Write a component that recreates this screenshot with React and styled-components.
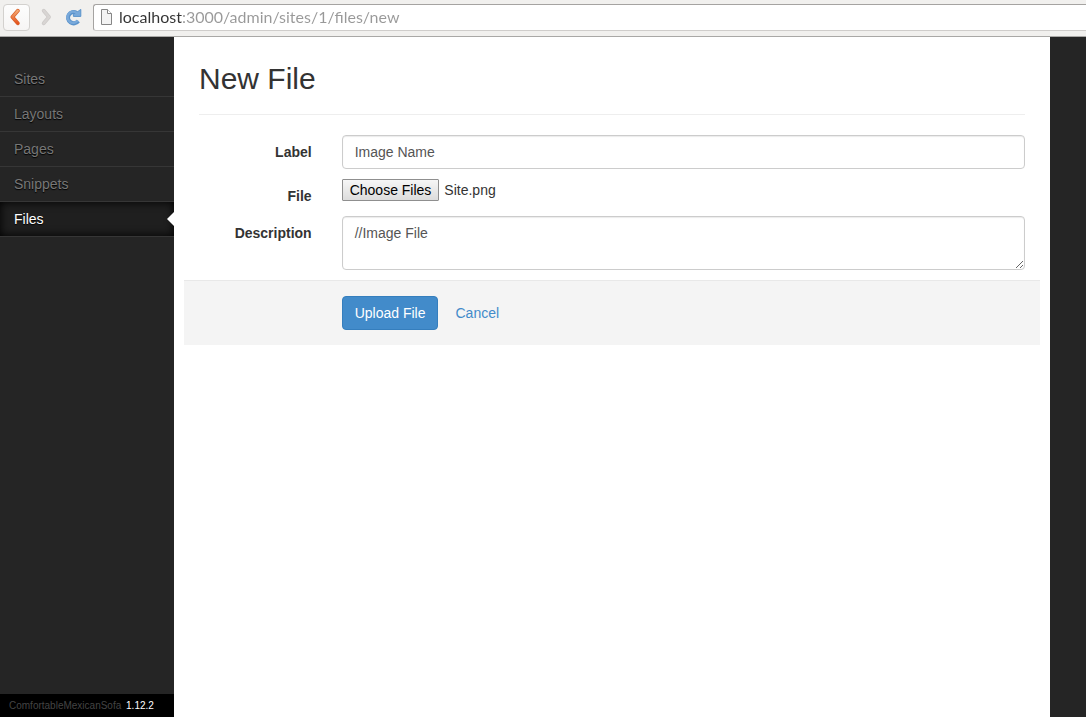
import React, { useEffect, useRef } from "react";
import styled, { createGlobalStyle, css } from "styled-components";

const GlobalStyle = createGlobalStyle`
  *, *::before, *::after { box-sizing: border-box; }
  body {
    margin: 0;
    background: #252525;
    color: #333;
    font: 14px/20px "Liberation Sans", Arial, sans-serif;
  }
  input, textarea, button { font: inherit; }
`;

const Page = styled.div`
  display: flex;
  flex-direction: column;
  min-height: 100vh;
`;

const Toolbar = styled.header`
  display: flex;
  align-items: center;
  height: 37px;
  padding: 0 0 2px 3px;
  background: #f1f0ee;
  border-bottom: 1px solid #a9a8a6;
`;

const ToolButton = styled.button`
  display: flex;
  align-items: center;
  justify-content: center;
  width: 27px;
  height: 27px;
  margin-right: 1px;
  padding: 0;
  border: 1px solid ${(p) => (p.$raised ? "#d3d1ce" : "transparent")};
  border-radius: 4px;
  background: ${(p) => (p.$raised ? "linear-gradient(#fdfdfd, #f6f5f4)" : "none")};
`;

const AddressBar = styled.div`
  display: flex;
  align-items: center;
  flex: 1;
  gap: 6px;
  height: 27px;
  margin-left: 6px;
  padding-left: 6px;
  background: #fff;
  border: 1px solid #a5a3a1;
  border-bottom-color: #cfcdcb;
  border-right: 0;
  border-radius: 3px 0 0 3px;
`;

const AddressInput = styled.input`
  flex: 1;
  min-width: 0;
  height: 24px;
  padding: 0;
  border: 0;
  outline: 0;
  font: 16px/24px Lato, "Noto Sans", sans-serif;
  color: transparent;
  background: linear-gradient(to right, #333 63px, #999 63px);
  background-clip: text;
`;

const Body = styled.div`
  display: flex;
  flex: 1;
`;

const Sidebar = styled.aside`
  display: flex;
  flex-direction: column;
  justify-content: space-between;
  flex: none;
  width: 174px;
  padding-top: 25px;
`;

const NavList = styled.ul`
  list-style: none;
  margin: 0;
  padding: 0;
`;

const NavLink = styled.a`
  position: relative;
  display: block;
  padding: 7px 14px;
  border-bottom: 1px solid #363636;
  color: #777;
  text-decoration: none;
  text-shadow: 0 1px 1px #000;
  ${(p) =>
    p.$active &&
    css`
      color: #fff;
      background: #1f1f1f;
      box-shadow: inset 0 0 10px #000;
      &::after {
        content: "";
        position: absolute;
        top: 10px;
        right: 0;
        border: 7px solid transparent;
        border-left: 0;
        border-right-color: #fff;
      }
    `}
`;

const Version = styled.footer`
  padding: 0 9px;
  background: #000;
  color: #444;
  font-size: 10px;
  line-height: 23px;
`;

const VersionLink = styled.a`
  margin-left: 2px;
  color: #fff;
  text-decoration: none;
`;

const Main = styled.main`
  flex: 1;
  min-width: 0;
  margin-right: 36px;
  padding: 25px;
  background: #fff;
`;

const Title = styled.h1`
  margin: 0 0 20px;
  padding-bottom: 19px;
  border-bottom: 1px solid #eee;
  font-size: 30px;
  font-weight: 400;
  line-height: 33px;
`;

const Form = styled.form`
  display: flex;
  flex-direction: column;
  gap: 10px;
  margin: 0 -15px;
`;

const Row = styled.div`
  display: grid;
  grid-template-columns: 1fr 5fr;
  align-items: start;
`;

const Label = styled.label`
  padding: 7px 15px 0;
  text-align: right;
  font-weight: 700;
`;

const Field = styled.div`
  display: flex;
  align-items: center;
  grid-column: 2;
  min-width: 0;
  padding: 0 15px;
`;

const control = css`
  display: block;
  width: 100%;
  padding: 6px 12px;
  border: 1px solid #ccc;
  border-radius: 4px;
  background: #fff;
  color: #555;
  box-shadow: inset 0 1px 1px rgba(0, 0, 0, 0.08);
`;

const TextInput = styled.input`
  ${control}
  height: 34px;
`;

const TextArea = styled.textarea`
  ${control}
  height: 54px;
  resize: vertical;
`;

const FileInput = styled.input`
  height: 22px;
  width: 100%;
  line-height: 20px;
  &::file-selector-button {
    height: 22px;
    margin: 0 5px 0 0;
    padding: 0 7px;
    border: 1px solid #8f8f8f;
    border-radius: 1px;
    background: linear-gradient(#f6f6f6, #dcdcdc);
    color: #000;
    font: inherit;
  }
`;

const Actions = styled(Row)`
  padding: 15px 0;
  border-top: 1px solid #e8e8e8;
  background: #f4f4f4;
`;

const Submit = styled.button`
  padding: 6px 12px;
  border: 1px solid #357ebd;
  border-radius: 4px;
  background: #428bca;
  color: #fff;
`;

const Cancel = styled.a`
  margin-left: 17px;
  color: #428bca;
  text-decoration: none;
`;

const sections = ["Sites", "Layouts", "Pages", "Snippets", "Files"];

function BackIcon() {
  return (
    <svg width="14" height="18" viewBox="0 0 14 18" fill="none" strokeLinecap="round" strokeLinejoin="round">
      <defs>
        <linearGradient id="back" x1="0" y1="0" x2="0" y2="1">
          <stop offset="0" stopColor="#f4a870" />
          <stop offset="1" stopColor="#e5541e" />
        </linearGradient>
      </defs>
      <path d="M7.8 2.8 L2.4 9 L7.8 15.2" stroke="#d9622c" strokeWidth="3.8" />
      <path d="M7.8 2.8 L2.4 9 L7.8 15.2" stroke="url(#back)" strokeWidth="2.4" />
    </svg>
  );
}

function ForwardIcon() {
  return (
    <svg width="14" height="18" viewBox="0 0 14 18" fill="none" strokeLinecap="round" strokeLinejoin="round">
      <path d="M5.7 2.8 L11 9 L5.7 15.2" stroke="#cdcac8" strokeWidth="3.8" />
      <path d="M5.7 2.8 L11 9 L5.7 15.2" stroke="#d8d5d3" strokeWidth="2.4" />
    </svg>
  );
}

function ReloadIcon() {
  return (
    <svg width="18" height="18" viewBox="0 0 18 18" fill="none">
      <path d="M12.4 4.8 A5.6 5.6 0 1 0 14.2 13" stroke="#5b93cb" strokeWidth="4.2" />
      <path d="M16.8 1.4 V8.4 H9.4 V6.2 L12.6 4.4 Z" fill="#79a9da" stroke="#5b93cb" strokeWidth="1" strokeLinejoin="round" />
      <path d="M13.4 5.6 A5.6 5.6 0 1 0 13.8 12.4" stroke="#79a9da" strokeWidth="2.4" />
    </svg>
  );
}

function PageIcon() {
  return (
    <svg width="13" height="16" viewBox="0 0 13 16" stroke="#868686" strokeLinejoin="round">
      <path d="M1.5 0.5 H7.5 L11.5 4.5 V15.5 H1.5 Z" fill="#f3f3f3" />
      <path d="M7.5 0.5 V4.5 H11.5" fill="#fff" />
    </svg>
  );
}

export default function App() {
  const fileRef = useRef(null);

  useEffect(() => {
    const transfer = new DataTransfer();
    transfer.items.add(new File([""], "Site.png", { type: "image/png" }));
    fileRef.current.files = transfer.files;
  }, []);

  return (
    <Page>
      <GlobalStyle />
      <Toolbar>
        <ToolButton $raised type="button" aria-label="Back"><BackIcon /></ToolButton>
        <ToolButton type="button" aria-label="Forward"><ForwardIcon /></ToolButton>
        <ToolButton type="button" aria-label="Reload"><ReloadIcon /></ToolButton>
        <AddressBar>
          <PageIcon />
          <AddressInput aria-label="Address" defaultValue="localhost:3000/admin/sites/1/files/new" />
        </AddressBar>
      </Toolbar>
      <Body>
        <Sidebar>
          <nav>
            <NavList>
              {sections.map((name) => (
                <li key={name}>
                  <NavLink href="#" $active={name === "Files"}>{name}</NavLink>
                </li>
              ))}
            </NavList>
          </nav>
          <Version>
            ComfortableMexicanSofa <VersionLink href="#">1.12.2</VersionLink>
          </Version>
        </Sidebar>
        <Main>
          <Title>New File</Title>
          <Form onSubmit={(e) => e.preventDefault()}>
            <Row>
              <Label htmlFor="label">Label</Label>
              <Field><TextInput id="label" type="text" defaultValue="Image Name" /></Field>
            </Row>
            <Row>
              <Label htmlFor="file">File</Label>
              <Field><FileInput id="file" type="file" multiple ref={fileRef} /></Field>
            </Row>
            <Row>
              <Label htmlFor="description">Description</Label>
              <Field><TextArea id="description" defaultValue="//Image File" /></Field>
            </Row>
            <Actions>
              <Field>
                <Submit type="submit">Upload File</Submit>
                <Cancel href="#">Cancel</Cancel>
              </Field>
            </Actions>
          </Form>
        </Main>
      </Body>
    </Page>
  );
}
